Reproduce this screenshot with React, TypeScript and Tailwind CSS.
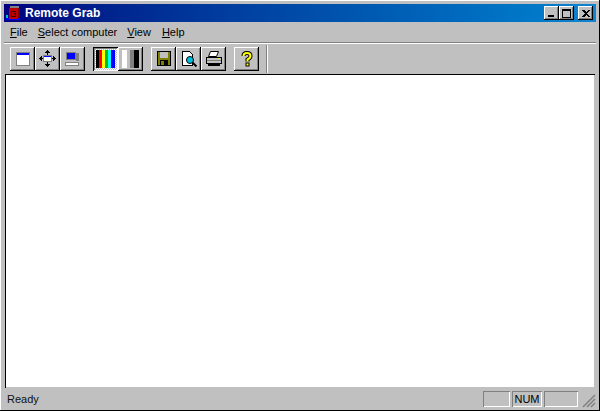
const raised = "shadow-[inset_-1px_-1px_0_#000,inset_1px_1px_0_#fff,inset_-2px_-2px_0_#808080]";

function CaptionButton({ children, className = "" }: { children: React.ReactNode; className?: string }) {
    return <div className={`w-[15px] h-[14px] bg-[#c0c0c0] ${raised} flex items-center justify-center ${className}`}>{children}</div>;
}

function ToolButton({ children, pressed = false }: { children: React.ReactNode; pressed?: boolean }) {
    return (
        <div className={`w-[25px] h-[24px] flex items-center justify-center ${pressed ? "shadow-[inset_1px_1px_0_#000,inset_-1px_-1px_0_#fff,inset_2px_2px_0_#808080] bg-[repeating-conic-gradient(#fff_0_25%,#c0c0c0_0_50%)] bg-[length:2px_2px]" : `bg-[#c0c0c0] ${raised}`}`}>
            {children}
        </div>
    );
}

function Icon({ children }: { children: React.ReactNode }) {
    return <svg width="18" height="18" viewBox="0 0 18 18" shapeRendering="crispEdges">{children}</svg>;
}

function Menu({ hot, rest }: { hot: string; rest: string }) {
    return <span className="px-[5px]"><span className="underline">{hot}</span>{rest}</span>;
}

function StatusCell({ children, w }: { children?: React.ReactNode; w: string }) {
    return <div className={`${w} h-[16px] flex items-center justify-center shadow-[inset_1px_1px_0_#808080,inset_-1px_-1px_0_#fff]`}>{children}</div>;
}

export default function App() {
    return (
        <div className="w-[600px] h-[411px] bg-[#c0c0c0] text-black text-[11px] leading-none flex flex-col overflow-hidden p-[4px] pb-[3px] shadow-[inset_-1px_-1px_0_#000,inset_1px_1px_0_#fff]" style={{ fontFamily: '"Liberation Sans", Arial, sans-serif' }}>
            <div className="h-[18px] shrink-0 flex items-center justify-between pl-[1px] pr-[3px] bg-gradient-to-r from-[#000080] to-[#1084d0]">
                <div className="flex items-center gap-[4px]">
                    <svg width="16" height="16" viewBox="0 0 16 16" shapeRendering="crispEdges">
                        <rect x="1" y="13" width="14" height="2" fill="#0000ff" />
                        <rect x="1" y="10" width="2" height="3" fill="#00c0c0" />
                        <rect x="5" y="1" width="9" height="3" fill="#808080" />
                        <rect x="4" y="3" width="9" height="11" fill="#c00000" />
                        <rect x="13" y="3" width="2" height="10" fill="#800000" />
                        <path d="M6 6h5v1H7v4h3V9H9V8h2v4H6z" fill="#400000" />
                    </svg>
                    <span className="text-white font-bold text-[12px]">Remote Grab</span>
                </div>
                <div className="flex items-center">
                    <CaptionButton>
                        <svg width="8" height="8" shapeRendering="crispEdges"><rect x="0" y="6" width="6" height="2" /></svg>
                    </CaptionButton>
                    <CaptionButton>
                        <svg width="9" height="9" shapeRendering="crispEdges"><path d="M0 0h9v9H0zM1 2v6h7V2z" fillRule="evenodd" /></svg>
                    </CaptionButton>
                    <CaptionButton className="ml-[4px]">
                        <svg width="8" height="7" shapeRendering="crispEdges"><path d="M0 0h2l2 2 2-2h2L5 3.500 8 7H6L4 5 2 7H0l3-3.500z" /></svg>
                    </CaptionButton>
                </div>
            </div>

            <div className="h-[20px] shrink-0 flex items-center pl-[1px]">
                <Menu hot="F" rest="ile" />
                <Menu hot="S" rest="elect computer" />
                <Menu hot="V" rest="iew" />
                <span className="w-[1px]" />
                <Menu hot="H" rest="elp" />
            </div>

            <div className="h-[2px] shrink-0 border-t border-t-[#808080] border-b border-b-white" />

            <div className="h-[30px] shrink-0 flex items-center pl-[6px] pb-[1px]">
                <ToolButton>
                    <svg width="14" height="14" viewBox="0 0 14 14" shapeRendering="crispEdges">
                        <rect x="0" y="0" width="14" height="14" fill="#808080" />
                        <rect x="1" y="1" width="12" height="2" fill="#0000ff" />
                        <rect x="1" y="3" width="12" height="10" fill="#fff" />
                    </svg>
                </ToolButton>
                <ToolButton>
                    <Icon>
                        <rect x="4" y="5" width="9" height="7" fill="#808080" />
                        <rect x="5" y="6" width="7" height="1" fill="#0000ff" />
                        <rect x="5" y="7" width="7" height="4" fill="#fff" />
                        <path d="M8.500 0l3 3H9v2H8V3H5.500zM8.500 17l3-3H9v-2H8v2H5.500zM0 8.500l3-3V8h1v1H3v2.500zM17 8.500l-3-3V8h-1v1h1v2.500z" />
                    </Icon>
                </ToolButton>
                <ToolButton>
                    <Icon>
                        <rect x="2" y="2" width="10" height="8" fill="#808080" />
                        <rect x="3" y="3" width="8" height="6" fill="#0000ff" />
                        <rect x="12" y="3" width="3" height="8" fill="#808080" />
                        <rect x="1" y="12" width="14" height="4" fill="#808080" />
                        <rect x="2" y="13" width="12" height="2" fill="#fff" />
                    </Icon>
                </ToolButton>
                <span className="w-[8px]" />
                <ToolButton pressed>
                    <svg width="19" height="18" viewBox="0 0 19 18" shapeRendering="crispEdges">
                        <rect x="0" y="0" width="3" height="18" fill="#000" />
                        <rect x="3" y="0" width="3" height="18" fill="#ff0000" />
                        <rect x="6" y="0" width="3" height="18" fill="#ffff00" />
                        <rect x="9" y="0" width="3" height="18" fill="#00c000" />
                        <rect x="12" y="0" width="3" height="18" fill="#00ffff" />
                        <rect x="15" y="0" width="4" height="18" fill="#0000ff" />
                    </svg>
                </ToolButton>
                <ToolButton>
                    <svg width="19" height="18" viewBox="0 0 19 18" shapeRendering="crispEdges">
                        <rect x="1" y="0" width="5" height="18" fill="#fff" />
                        <rect x="6" y="0" width="3" height="18" fill="#c0c0c0" />
                        <rect x="9" y="0" width="4" height="18" fill="#808080" />
                        <rect x="13" y="0" width="5" height="18" fill="#000" />
                    </svg>
                </ToolButton>
                <span className="w-[8px]" />
                <ToolButton>
                    <Icon>
                        <path d="M2 1h14v15H2z" fill="#000" />
                        <path d="M3 2h12v13H3z" fill="#808000" />
                        <rect x="5" y="2" width="8" height="6" fill="#c0c0c0" />
                        <rect x="5" y="10" width="8" height="5" fill="#000" />
                        <rect x="6" y="11" width="3" height="4" fill="#808000" />
                    </Icon>
                </ToolButton>
                <ToolButton>
                    <Icon>
                        <path d="M2.500 1.500h7l3 3v11h-10z" fill="#fff" stroke="#000" />
                        <circle cx="10" cy="10" r="3.500" fill="#00c0e0" stroke="#000" shapeRendering="auto" />
                        <path d="M12.500 12.500l4 4" stroke="#000" strokeWidth="2" shapeRendering="auto" />
                    </Icon>
                </ToolButton>
                <ToolButton>
                    <Icon>
                        <path d="M5.500 1.500l8 0-2 5-8 0z" fill="#fff" stroke="#000" shapeRendering="auto" />
                        <path d="M1.500 7.500h15v6h-15z" fill="#c0c0c0" stroke="#000" />
                        <rect x="2" y="10" width="14" height="1" fill="#808080" />
                        <rect x="3" y="14" width="12" height="2" fill="#000" />
                        <rect x="13" y="8" width="2" height="1" fill="#ffff00" />
                    </Icon>
                </ToolButton>
                <span className="w-[8px]" />
                <ToolButton>
                    <svg width="18" height="18" viewBox="0 0 18 18">
                        <path d="M5.500 6 Q5.500 3 9 3 Q12.500 3 12.500 6 Q12.500 8 9.500 9.500 V11.500" fill="none" stroke="#000" strokeWidth="4" />
                        <rect x="7.500" y="12.500" width="4" height="4" fill="#000" />
                        <path d="M5.500 6 Q5.500 3 9 3 Q12.500 3 12.500 6 Q12.500 8 9.500 9.500 V11.500" fill="none" stroke="#ffff00" strokeWidth="2" />
                        <rect x="8.500" y="13.500" width="2" height="2" fill="#ffff00" />
                    </svg>
                </ToolButton>
                <div className="w-[2px] h-[28px] ml-[7px] border-l border-l-[#808080] border-r border-r-white" />
            </div>

            <div className="flex-1 mx-[1px] bg-white shadow-[inset_1px_1px_0_#000,inset_-1px_-1px_0_#c0c0c0]" />

            <div className="h-[20px] shrink-0 flex items-center pt-[2px]">
                <span className="flex-1 text-[#101010] pl-[3px]">Ready</span>
                <div className="flex gap-[2px] pr-[4px]">
                    <StatusCell w="w-[27px]" />
                    <StatusCell w="w-[30px]">NUM</StatusCell>
                    <StatusCell w="w-[34px]" />
                </div>
                <svg width="14" height="14" viewBox="0 0 14 14" className="mt-[3px]">
                    <path d="M1 13L13 1M5 13l8-8M9 13l4-4" stroke="#808080" strokeWidth="1.500" />
                </svg>
            </div>
        </div>
    );
}
